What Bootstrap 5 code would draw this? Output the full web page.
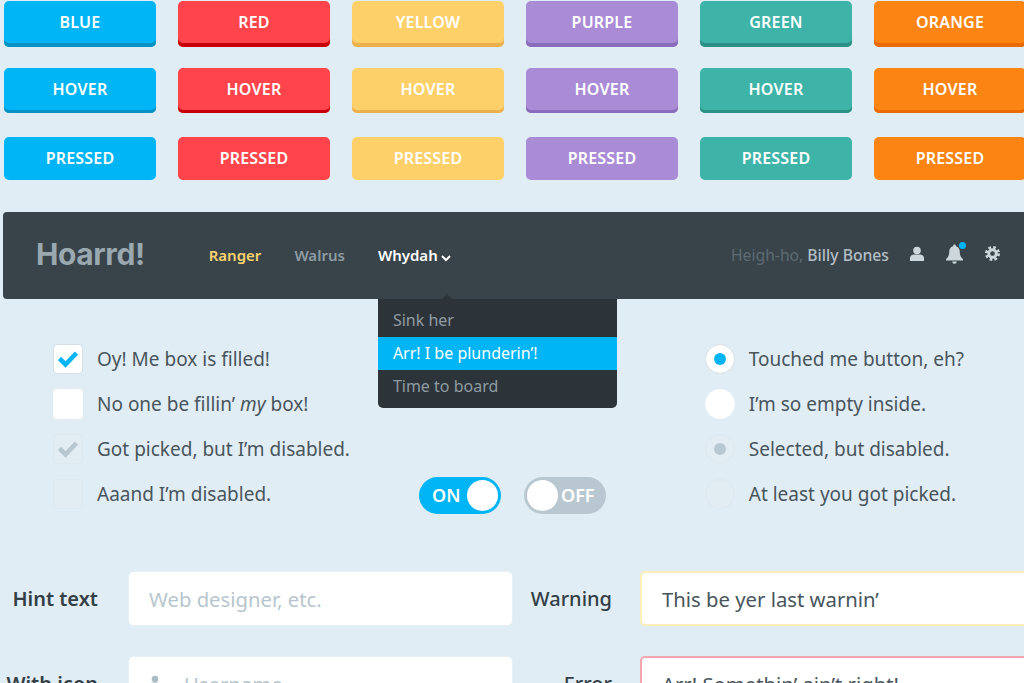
<!DOCTYPE html>
<html lang="en">
<head>
  <meta charset="UTF-8" />
  <meta name="viewport" content="width=device-width, initial-scale=1.0" />
  <title>Hoarrd! UI kit</title>
  <link href="https://cdn.jsdelivr.net/npm/bootstrap@5.3.0/dist/css/bootstrap.min.css" rel="stylesheet" />
  <style>
    html { overflow: hidden; height: 683px; }
    body { background: #e1edf5; font-family: "Noto Sans", sans-serif; color: #48555c; overflow: hidden; height: 683px; }
    .sheet { width: 1032px; padding-left: 3px; }

    .kit-row { display: flex; gap: 22px; margin-left: 1px; }
    .kit-row-1 { margin-top: 1px; margin-bottom: 21px; }
    .kit-row-2 { margin-bottom: 24px; }
    .kit-btn { width: 152px; height: 46px; border: 0; border-radius: 5px; color: #fff; font-size: 16px; font-weight: 600; letter-spacing: .2px; padding: 0 0 4px; text-transform: uppercase; }
    .kit-row-2 .kit-btn { height: 45px; padding-bottom: 3px; }
    .kit-row-3 .kit-btn { height: 43px; padding-bottom: 2px; }
    .kit-btn, .kit-btn:hover, .kit-btn:active { color: #fff; }
    .c-blue { background: #00b5f5; --edge: #0a92c4; }
    .c-red { background: #ff444c; --edge: #c70009; }
    .c-yellow { background: #fdd06a; --edge: #edb04f; }
    .c-purple { background: #a98bd6; --edge: #8a6cbc; }
    .c-green { background: #3eb3a8; --edge: #2b9187; }
    .c-orange { background: #fb8413; --edge: #ec6a05; }
    .kit-row-1 .kit-btn { box-shadow: inset 0 -4px 0 var(--edge); }
    .kit-row-2 .kit-btn { box-shadow: inset 0 -3px 0 var(--edge); }

    .hoard-nav { background: #38444a; border-radius: 4px; height: 87px; margin-top: 32px; padding: 0 32px 0 33px; }
    .hoard-brand { color: #9aa8b0; font-family: Inter, sans-serif; font-size: 30px; font-weight: 700; letter-spacing: -.4px; padding: 0 0 2px; margin: 0 64px 0 0; }
    .hoard-nav.navbar-expand .navbar-nav .nav-link { font-size: 15px; font-weight: 600; padding: 0; margin-right: 33px; color: #8e9ba2; }
    .hoard-nav.navbar-expand .navbar-nav .nav-link.on-yellow { color: #fdd36e; }
    .hoard-nav.navbar-expand .navbar-nav .nav-link.on-white { color: #fff; }
    .chev { margin-left: 3px; vertical-align: -1px; }
    .nav-tip { position: absolute; top: 50px; left: 63px; border: 6px solid transparent; border-top: 0; border-bottom-color: #2d3439; }
    .hoard-menu { display: block; position: absolute; top: 55px; left: 0; width: 239px; margin: 0; padding: 5px 0; border: 0; border-radius: 0 0 5px 5px; background: #2d3439; }
    .hoard-menu .dropdown-item { font-size: 16px; color: #8f9ba2; padding: 0 15px; height: 33px; line-height: 33px; }
    .hoard-menu .dropdown-item.active { background: #00b5f5; color: #fff; }
    .greet { font-size: 15.7px; color: #5e6b72; margin-right: 21px; }
    .greet b { color: #b4bfc4; font-weight: 500; }
    .nav-icons { gap: 22px; color: #ccd6db; margin-bottom: 4px; }
    .bell-wrap { position: relative; display: block; }
    .bell-dot { position: absolute; top: -2px; right: -3px; width: 7px; height: 7px; border-radius: 50%; background: #00b5f5; }

    .pick-area { margin-top: 45px; padding-left: 50px; padding-right: 68px; }
    .pick-col { display: flex; flex-direction: column; gap: 15px; }
    .pick-line { display: flex; align-items: center; gap: 14px; height: 30px; margin: 0; padding: 0; font-size: 19px; min-height: 0; }
    .pick-line .form-check-input { float: none; width: 30px; height: 30px; margin: 0; border: 1px solid #d5dfe5; background-color: #fff; background-size: 20px; box-shadow: none; flex: none; }
    .pick-line .form-check-input:not(:checked) { border-color: #fff; }
    .pick-line .form-check-input[type=checkbox] { border-radius: 4px; }
    .pick-line .form-check-input[type=checkbox]:checked { background-image: url("data:image/svg+xml,%3csvg xmlns='http://www.w3.org/2000/svg' viewBox='0 0 20 20'%3e%3cpath fill='none' stroke='%2300b5f5' stroke-width='4.6' d='M1.500 9.500l6 6 11-11.500'/%3e%3c/svg%3e"); }
    .pick-line .form-check-input[type=radio]:checked { background-size: 12px; background-image: url("data:image/svg+xml,%3csvg xmlns='http://www.w3.org/2000/svg' viewBox='0 0 12 12'%3e%3ccircle cx='6' cy='6' r='6' fill='%2300b5f5'/%3e%3c/svg%3e"); }
    .pick-line .form-check-input:disabled { opacity: 1; background-color: #e1ecf3; border-color: #dde8ef; }
    .pick-line .form-check-input[type=checkbox]:disabled:checked { background-image: url("data:image/svg+xml,%3csvg xmlns='http://www.w3.org/2000/svg' viewBox='0 0 20 20'%3e%3cpath fill='none' stroke='%23b8c8d0' stroke-width='4.6' d='M1.500 9.500l6 6 11-11.500'/%3e%3c/svg%3e"); }
    .pick-line .form-check-input[type=radio]:disabled:checked { background-image: url("data:image/svg+xml,%3csvg xmlns='http://www.w3.org/2000/svg' viewBox='0 0 12 12'%3e%3ccircle cx='6' cy='6' r='6' fill='%23b8c8d0'/%3e%3c/svg%3e"); }
    .pick-line .form-check-label { opacity: 1 !important; color: #48555c; white-space: nowrap; }

    .switch-col { padding-top: 133px; margin-left: 69px; gap: 23px; }
    .tog { display: flex; align-items: center; width: 82px; height: 37px; border-radius: 19px; padding: 3px; font-size: 18px; font-weight: 600; color: #fff; }
    .tog-on { background: #00b5f5; justify-content: space-between; padding-left: 13px; }
    .tog-off { background: #b9c8d0; gap: 3px; }
    .tog-knob { width: 31px; height: 31px; border-radius: 50%; background: #fff; flex: none; }

    .form-area { margin-top: 57px; }
    .form-line { display: flex; align-items: center; margin-bottom: 30px; }
    .form-line label { width: 95px; text-align: right; font-size: 20px; font-weight: 600; color: #333f45; margin: 0; white-space: nowrap; flex: none; }
    .form-line label.lbl-b { width: 99px; font-weight: 500; }
    .form-line .field { position: relative; flex: none; margin-left: 30px; width: 385px; }
    .form-line .field-b { margin-left: 28px; width: 392px; }
    .form-line .form-control { height: 55px; border: 1px solid #e7f0f5; border-radius: 5px; padding: 0 20px; font-size: 20.3px; color: #48555c; box-shadow: none; }
    .form-control::placeholder { color: #b7c6ce; }
    .form-line .ctl-warn { border: 2px solid #fbeeb8; }
    .form-line .ctl-err { border: 2px solid #f5a5ab; }
    .form-line .ctl-icon { padding-left: 55px; }
    .field-ico { position: absolute; left: 21px; top: 19px; }
  </style>
</head>
<body>
  <div class="sheet">
    <!-- Buttons -->
    <div class="kit-row kit-row-1">
      <button class="btn kit-btn c-blue">Blue</button>
      <button class="btn kit-btn c-red">Red</button>
      <button class="btn kit-btn c-yellow">Yellow</button>
      <button class="btn kit-btn c-purple">Purple</button>
      <button class="btn kit-btn c-green">Green</button>
      <button class="btn kit-btn c-orange">Orange</button>
    </div>
    <div class="kit-row kit-row-2">
      <button class="btn kit-btn c-blue">Hover</button>
      <button class="btn kit-btn c-red">Hover</button>
      <button class="btn kit-btn c-yellow">Hover</button>
      <button class="btn kit-btn c-purple">Hover</button>
      <button class="btn kit-btn c-green">Hover</button>
      <button class="btn kit-btn c-orange">Hover</button>
    </div>
    <div class="kit-row kit-row-3">
      <button class="btn kit-btn c-blue">Pressed</button>
      <button class="btn kit-btn c-red">Pressed</button>
      <button class="btn kit-btn c-yellow">Pressed</button>
      <button class="btn kit-btn c-purple">Pressed</button>
      <button class="btn kit-btn c-green">Pressed</button>
      <button class="btn kit-btn c-orange">Pressed</button>
    </div>

    <!-- Navbar -->
    <nav class="navbar navbar-expand hoard-nav">
      <a class="navbar-brand hoard-brand" href="#">Hoarrd!</a>
      <ul class="navbar-nav align-items-center">
        <li class="nav-item"><a class="nav-link on-yellow" href="#">Ranger</a></li>
        <li class="nav-item"><a class="nav-link" href="#">Walrus</a></li>
        <li class="nav-item dropdown position-relative">
          <a class="nav-link on-white" href="#">Whydah<svg class="chev" width="10" height="7" viewBox="0 0 10 7"><path d="M1 1l4 4 4-4" fill="none" stroke="#fff" stroke-width="2"/></svg></a>
          <span class="nav-tip"></span>
          <ul class="dropdown-menu hoard-menu">
            <li><a class="dropdown-item" href="#">Sink her</a></li>
            <li><a class="dropdown-item active" href="#">Arr! I be plunderin’!</a></li>
            <li><a class="dropdown-item" href="#">Time to board</a></li>
          </ul>
        </li>
      </ul>
      <div class="d-flex align-items-center ms-auto">
        <span class="greet">Heigh-ho, <b>Billy Bones</b></span>
        <div class="d-flex align-items-center nav-icons">
          <svg width="14" height="16" viewBox="0 0 14 16"><circle cx="7" cy="4.500" r="3.800" fill="currentColor"/><path d="M0 15v-3c0-2.200 2-3 3.500-3.400h7C12 9 14 9.800 14 12v3z" fill="currentColor"/></svg>
          <span class="bell-wrap"><svg class="d-block" width="17" height="20" viewBox="0 0 16 18"><path d="M8 0a1.400 1.400 0 0 1 1.300 1.700C12 2.400 13 4.600 13 7c0 3.500 1 5 3 7v1H0v-1c2-2 3-3.500 3-7 0-2.400 1-4.600 3.700-5.300A1.400 1.400 0 0 1 8 0zM5.800 16h4.400a2.200 2.200 0 0 1-4.400 0z" fill="currentColor"/></svg><span class="bell-dot"></span></span>
          <svg width="15" height="15" viewBox="0 0 16 16"><circle cx="8" cy="8" r="4" fill="none" stroke="currentColor" stroke-width="3"/><circle cx="8" cy="8" r="6.500" fill="none" stroke="currentColor" stroke-width="3" stroke-dasharray="2.800 2.300"/></svg>
        </div>
      </div>
    </nav>

    <!-- Checkboxes, switches, radios -->
    <div class="pick-area d-flex">
      <div class="pick-col">
        <div class="form-check pick-line"><input class="form-check-input" type="checkbox" id="c1" checked /><label class="form-check-label" for="c1">Oy! Me box is filled!</label></div>
        <div class="form-check pick-line"><input class="form-check-input" type="checkbox" id="c2" /><label class="form-check-label" for="c2">No one be fillin’ <em>my</em> box!</label></div>
        <div class="form-check pick-line"><input class="form-check-input" type="checkbox" id="c3" checked disabled /><label class="form-check-label" for="c3">Got picked, but I’m disabled.</label></div>
        <div class="form-check pick-line"><input class="form-check-input" type="checkbox" id="c4" disabled /><label class="form-check-label" for="c4">Aaand I’m disabled.</label></div>
      </div>
      <div class="d-flex switch-col">
        <div class="tog tog-on"><span>ON</span><span class="tog-knob"></span></div>
        <div class="tog tog-off"><span class="tog-knob"></span><span>OFF</span></div>
      </div>
      <div class="pick-col ms-auto">
        <div class="form-check pick-line"><input class="form-check-input" type="radio" name="r1" id="r1" checked /><label class="form-check-label" for="r1">Touched me button, eh?</label></div>
        <div class="form-check pick-line"><input class="form-check-input" type="radio" name="r2" id="r2" /><label class="form-check-label" for="r2">I’m so empty inside.</label></div>
        <div class="form-check pick-line"><input class="form-check-input" type="radio" name="r3" id="r3" checked disabled /><label class="form-check-label" for="r3">Selected, but disabled.</label></div>
        <div class="form-check pick-line"><input class="form-check-input" type="radio" name="r4" id="r4" disabled /><label class="form-check-label" for="r4">At least you got picked.</label></div>
      </div>
    </div>

    <!-- Text fields -->
    <div class="form-area">
      <div class="form-line">
        <label for="f1">Hint text</label>
        <div class="field"><input class="form-control" id="f1" placeholder="Web designer, etc." /></div>
        <label class="lbl-b" for="f2">Warning</label>
        <div class="field field-b"><input class="form-control ctl-warn" id="f2" value="This be yer last warnin’" /></div>
      </div>
      <div class="form-line">
        <label for="f3">With icon</label>
        <div class="field">
          <input class="form-control ctl-icon" id="f3" placeholder="Username" />
          <svg class="field-ico" width="12" height="14" viewBox="0 0 14 16"><circle cx="7" cy="4.500" r="3.800" fill="#a9bcc5"/><path d="M0 15v-3c0-2.200 2-3 3.500-3.400h7C12 9 14 9.800 14 12v3z" fill="#a9bcc5"/></svg>
        </div>
        <label class="lbl-b" for="f4">Error</label>
        <div class="field field-b"><input class="form-control ctl-err" id="f4" value="Arr! Somethin’ ain’t right!" /></div>
      </div>
    </div>
  </div>

  <script src="https://cdn.jsdelivr.net/npm/bootstrap@5.3.0/dist/js/bootstrap.bundle.min.js"></script>
</body>
</html>
